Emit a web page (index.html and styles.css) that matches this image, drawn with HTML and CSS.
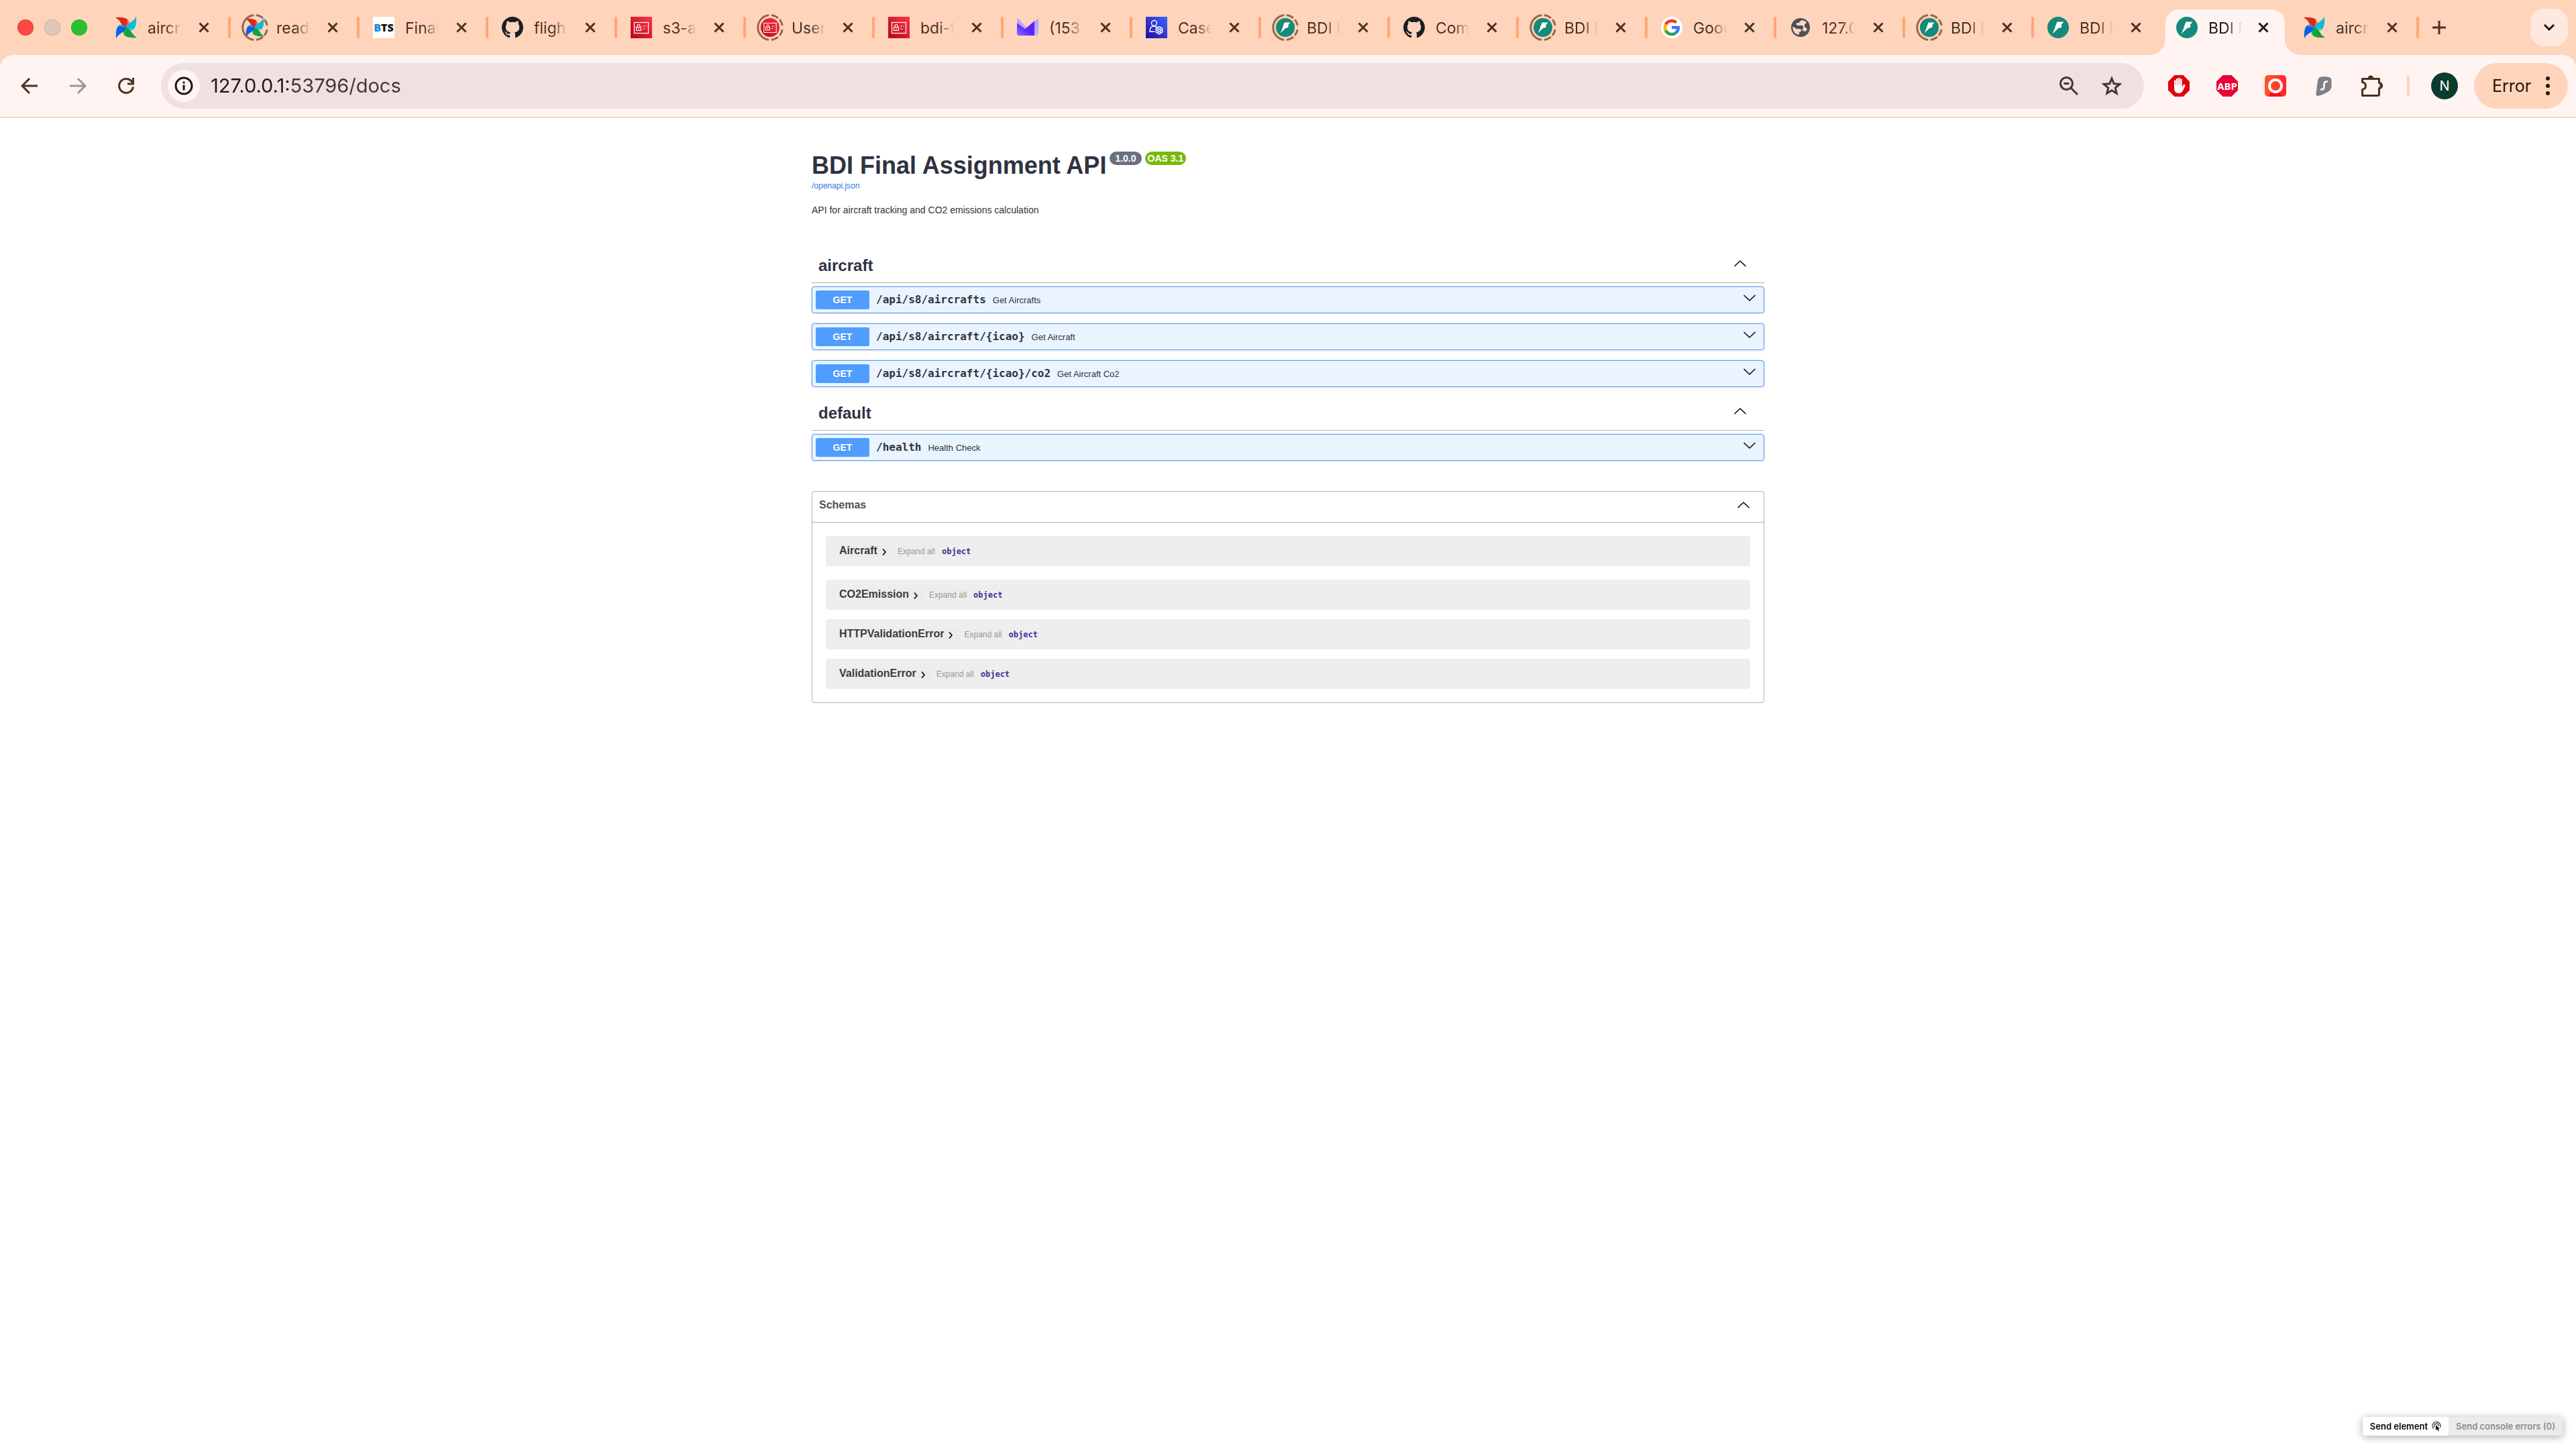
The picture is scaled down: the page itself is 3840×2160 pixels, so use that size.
FILE: index.html
```html
<!DOCTYPE html>
<html lang="en">
<head>
<meta charset="utf-8">
<title>BDI Final Assignment API</title>
<link rel="stylesheet" href="styles.css">
</head>
<body>
<svg class="defs" width="0" height="0" aria-hidden="true">
  <defs>
    <linearGradient id="red" x1="0" y1="1" x2="1" y2="0"><stop offset="0" stop-color="#b8041a"/><stop offset="1" stop-color="#ff3545"/></linearGradient>
    <linearGradient id="blue" x1="0" y1="1" x2="1" y2="0"><stop offset="0" stop-color="#220ba0"/><stop offset="1" stop-color="#3f66ff"/></linearGradient>
    <linearGradient id="mail" x1="0" y1="1" x2="1" y2="0"><stop offset="0" stop-color="#8f6bff"/><stop offset=".5" stop-color="#5a24fb"/></linearGradient>
    <linearGradient id="mailedge" x1="0" y1="0" x2="0" y2="1"><stop offset="0" stop-color="#b39cff"/><stop offset="1" stop-color="#c9b3f5"/></linearGradient>
    <linearGradient id="orange" x1="0" y1="0" x2="1" y2="0"><stop offset="0" stop-color="#ff5a26"/><stop offset="1" stop-color="#ff2430"/></linearGradient>
    <path id="blade" d="M0 1Q13 0 18 4Q22 8 19 12L16 16Q11 15 8 9Q5 4 0 1Z"/>
    <path id="bladelight" d="M18 4Q22 8 19 12L16 16Q18 10 18 4Z"/>
    <symbol id="pinwheel" viewBox="0 0 32 32">
      <use href="#blade" fill="#dd2a1c"/><use href="#bladelight" fill="#ff6a4a"/>
      <g transform="rotate(90 16 16)"><use href="#blade" fill="#14b8cf"/><use href="#bladelight" fill="#15dbef"/></g>
      <g transform="rotate(180 16 16)"><use href="#blade" fill="#13a336"/><use href="#bladelight" fill="#00c653"/></g>
      <g transform="rotate(270 16 16)"><use href="#blade" fill="#0b5fea"/><use href="#bladelight" fill="#13b6e8"/></g>
    </symbol>
    <symbol id="github" viewBox="0 0 16 16"><path fill="#1b1f24" d="M8 0C3.58 0 0 3.58 0 8c0 3.54 2.29 6.53 5.47 7.59.4.07.55-.17.55-.38 0-.19-.01-.82-.01-1.49-2.01.37-2.53-.49-2.69-.94-.09-.23-.48-.94-.82-1.13-.28-.15-.68-.52-.01-.53.63-.01 1.08.58 1.23.82.72 1.21 1.87.87 2.33.66.07-.52.28-.87.51-1.07-1.78-.2-3.64-.89-3.64-3.95 0-.87.31-1.59.82-2.15-.08-.2-.36-1.02.08-2.12 0 0 .67-.21 2.2.82.64-.18 1.32-.27 2-.27s1.36.09 2 .27c1.53-1.04 2.2-.82 2.2-.82.44 1.1.16 1.92.08 2.12.51.56.82 1.27.82 2.15 0 3.07-1.87 3.75-3.65 3.95.29.25.54.73.54 1.48 0 1.07-.01 1.93-.01 2.2 0 .21.15.46.55.38A8.01 8.01 0 0 0 16 8c0-4.42-3.58-8-8-8z"/></symbol>
    <symbol id="iamcard" viewBox="0 0 32 32"><g fill="none" stroke="#fff" stroke-width="1.200"><rect x="5.500" y="8.500" width="21" height="16"/><rect x="8.500" y="15.500" width="7" height="5"/><path d="M10 15.500v-2a2 2 0 0 1 4 0v2M12 17v2M18.500 14h2.500M22.500 14h1.500M18.500 18h3"/></g></symbol>
    <symbol id="iam" viewBox="0 0 32 32"><rect width="32" height="32" fill="url(#red)"/><use href="#iamcard"/></symbol>
    <symbol id="iamround" viewBox="0 0 32 32"><circle cx="16" cy="16" r="16" fill="url(#red)"/><use href="#iamcard"/></symbol>
    <symbol id="proton" viewBox="0 0 32 32"><path d="M26 6.500L32 3v22a3 3 0 0 1-3 3h-3z" fill="url(#mailedge)"/><path d="M0 9L12 18L26 6.500V28H3a3 3 0 0 1-3-3z" fill="url(#mail)"/><path d="M0 4Q0 1 3 4L13 15Q16 17 19 13L12 18L0 9z" fill="#b8a1ff"/></symbol>
    <symbol id="cases" viewBox="0 0 32 32"><rect width="32" height="32" fill="url(#blue)"/><g fill="none" stroke="#fff" stroke-width="1.400"><circle cx="12.500" cy="9.500" r="4"/><path d="M13 22H6Q6 14 12 14Q15 14 17 16"/><circle cx="20" cy="20.500" r="2"/><path d="M18.700 15h2.600l.5 2 2-.6 1.300 2.200-1.500 1.500 1.500 1.600-1.300 2.200-2-.5-.5 2.100h-2.600l-.5-2.100-2 .5-1.300-2.200 1.500-1.600-1.500-1.500 1.300-2.200 2 .6z"/></g></symbol>
    <symbol id="fastapi" viewBox="0 0 32 32"><circle cx="16" cy="16" r="16" fill="#15897a"/><path fill="#fff" d="M14.500 7.500H24.500L20 13H22L20 16.500H17L7.500 25.500L11.500 16.500L11 16.500Z"/></symbol>
    <symbol id="google" viewBox="0 0 32 32"><circle cx="16" cy="16" r="16" fill="#fff"/><g fill="none" stroke-width="4.500"><path stroke="#ea3a31" d="M7 11.500A10 10 0 0 1 22.700 8.700"/><path stroke="#fbb704" d="M7 11.500A10 10 0 0 0 7 20.500"/><path stroke="#2ba24c" d="M7 20.500A10 10 0 0 0 22.400 23.700"/><path stroke="#3a79f2" d="M22.400 23.700A10 10 0 0 0 25.800 16H16"/></g></symbol>
    <symbol id="globe" viewBox="0 0 32 32"><circle cx="16" cy="16" r="14" fill="#4b5157"/><path fill="#fed4bb" d="M4 15Q7 15 10 18H14Q18 18 17 22Q13 22 14 27Q5 26 4 15ZM19 5Q14 6 14 9H10Q9 13 12 13H19Q22 17 18 19Q23 25 26 19Q25 16 22 15V11Q26 10 24 7Z"/></symbol>
    <symbol id="ring" viewBox="0 0 40 40"><g fill="none" stroke="#95674c" stroke-width="3" stroke-linecap="round"><path d="M17 1.800A18.500 18.500 0 0 0 17 38.200"/><path d="M23 1.800A18.500 18.500 0 0 1 31 5.200M34.800 9.200A18.500 18.500 0 0 1 38 15.800M38 24.200A18.500 18.500 0 0 1 34.800 30.800M31 34.800A18.500 18.500 0 0 1 23 38.200"/></g></symbol>
    <symbol id="close" viewBox="0 0 16 16"><path d="M1.500 1.500l13 13M14.500 1.500l-13 13" fill="none" stroke="currentColor" stroke-width="3"/></symbol>
    <symbol id="up" viewBox="0 0 18 10"><path d="M.5 9L9 1L17.500 9" fill="none" stroke="#000" stroke-width="1.500" stroke-linejoin="round"/></symbol>
    <symbol id="down" viewBox="0 0 18 10"><path d="M.5 1L9 9L17.500 1" fill="none" stroke="#000" stroke-width="1.500" stroke-linejoin="round"/></symbol>
    <symbol id="next" viewBox="0 0 8 12"><path d="M2 1.500L6 6L2 10.500" fill="none" stroke="#000" stroke-width="1.600"/></symbol>
  </defs>
</svg>

<header class="browser">
  <div class="strip">
    <div class="lights"><i class="light light-close"></i><i class="light light-min"></i><i class="light light-full"></i></div>
    <div class="tabs">
      <div class="tab"><span class="favicon"><svg class="fav"><use href="#pinwheel"/></svg></span><span class="label">aircr</span><button class="close" aria-label="Close tab"><svg><use href="#close"/></svg></button></div>
      <div class="tab"><span class="favicon ringed"><svg class="ring"><use href="#ring"/></svg><svg class="fav"><use href="#pinwheel"/></svg></span><span class="label">read</span><button class="close" aria-label="Close tab"><svg><use href="#close"/></svg></button></div>
      <div class="tab"><span class="favicon"><span class="bts"><b>B</b>TS</span></span><span class="label">Final</span><button class="close" aria-label="Close tab"><svg><use href="#close"/></svg></button></div>
      <div class="tab"><span class="favicon"><svg class="fav"><use href="#github"/></svg></span><span class="label">fligh</span><button class="close" aria-label="Close tab"><svg><use href="#close"/></svg></button></div>
      <div class="tab"><span class="favicon"><svg class="fav"><use href="#iam"/></svg></span><span class="label">s3-a</span><button class="close" aria-label="Close tab"><svg><use href="#close"/></svg></button></div>
      <div class="tab"><span class="favicon ringed"><svg class="ring"><use href="#ring"/></svg><svg class="fav"><use href="#iamround"/></svg></span><span class="label">User</span><button class="close" aria-label="Close tab"><svg><use href="#close"/></svg></button></div>
      <div class="tab"><span class="favicon"><svg class="fav"><use href="#iam"/></svg></span><span class="label">bdi-f</span><button class="close" aria-label="Close tab"><svg><use href="#close"/></svg></button></div>
      <div class="tab"><span class="favicon"><svg class="fav"><use href="#proton"/></svg></span><span class="label">(153</span><button class="close" aria-label="Close tab"><svg><use href="#close"/></svg></button></div>
      <div class="tab"><span class="favicon"><svg class="fav"><use href="#cases"/></svg></span><span class="label">Case</span><button class="close" aria-label="Close tab"><svg><use href="#close"/></svg></button></div>
      <div class="tab"><span class="favicon ringed"><svg class="ring"><use href="#ring"/></svg><svg class="fav"><use href="#fastapi"/></svg></span><span class="label">BDI F</span><button class="close" aria-label="Close tab"><svg><use href="#close"/></svg></button></div>
      <div class="tab"><span class="favicon"><svg class="fav"><use href="#github"/></svg></span><span class="label">Com</span><button class="close" aria-label="Close tab"><svg><use href="#close"/></svg></button></div>
      <div class="tab"><span class="favicon ringed"><svg class="ring"><use href="#ring"/></svg><svg class="fav"><use href="#fastapi"/></svg></span><span class="label">BDI F</span><button class="close" aria-label="Close tab"><svg><use href="#close"/></svg></button></div>
      <div class="tab"><span class="favicon"><svg class="fav"><use href="#google"/></svg></span><span class="label">Goog</span><button class="close" aria-label="Close tab"><svg><use href="#close"/></svg></button></div>
      <div class="tab"><span class="favicon"><svg class="fav"><use href="#globe"/></svg></span><span class="label">127.0</span><button class="close" aria-label="Close tab"><svg><use href="#close"/></svg></button></div>
      <div class="tab"><span class="favicon ringed"><svg class="ring"><use href="#ring"/></svg><svg class="fav"><use href="#fastapi"/></svg></span><span class="label">BDI F</span><button class="close" aria-label="Close tab"><svg><use href="#close"/></svg></button></div>
      <div class="tab plain"><span class="favicon"><svg class="fav"><use href="#fastapi"/></svg></span><span class="label">BDI F</span><button class="close" aria-label="Close tab"><svg><use href="#close"/></svg></button></div>
      <div class="tab plain active"><svg class="tab-shape" viewBox="0 0 226 68"><path fill="#fff4f1" d="M0 68A24 24 0 0 0 24 44V20A20 20 0 0 1 44 0H182A20 20 0 0 1 202 20V44A24 24 0 0 0 226 68Z"/></svg><span class="favicon"><svg class="fav"><use href="#fastapi"/></svg></span><span class="label">BDI F</span><button class="close" aria-label="Close tab"><svg><use href="#close"/></svg></button></div>
      <div class="tab"><span class="favicon"><svg class="fav"><use href="#pinwheel"/></svg></span><span class="label">aircr</span><button class="close" aria-label="Close tab"><svg><use href="#close"/></svg></button></div>
    </div>
    <button class="new-tab" aria-label="New tab"><svg width="20" height="20" viewBox="0 0 20 20"><path d="M10 0v20M0 10h20" stroke="#4a3020" stroke-width="3"/></svg></button>
    <button class="tab-search" aria-label="Search tabs"><svg width="18" height="12" viewBox="0 0 18 12"><path d="M2 2l7 7 7-7" fill="none" stroke="#1f1510" stroke-width="3"/></svg></button>
  </div>

  <div class="toolbar">
    <div class="nav">
      <button class="tool" aria-label="Back"><svg width="26" height="26" viewBox="0 0 26 26"><path d="M25 13H3M13 2L2 13l11 11" fill="none" stroke="#4a3020" stroke-width="3"/></svg></button>
      <button class="tool" aria-label="Forward"><svg width="26" height="26" viewBox="0 0 26 26"><path d="M1 13h22M13 2l11 11-11 11" fill="none" stroke="#a2938e" stroke-width="3"/></svg></button>
      <button class="tool" aria-label="Reload"><svg width="26" height="26" viewBox="0 0 26 26"><path d="M23.500 14.500A10.500 10.500 0 1 1 21 6l2 3" fill="none" stroke="#4a3020" stroke-width="3"/><path d="M23.500 1v9H15" fill="none" stroke="#4a3020" stroke-width="3"/></svg></button>
    </div>
    <div class="omnibox">
      <button class="site-info" aria-label="Site information"><svg width="28" height="28" viewBox="0 0 28 28"><circle cx="14" cy="14" r="12" fill="none" stroke="#1f1815" stroke-width="3"/><path d="M14 12.500v8M14 7.500v3" stroke="#1f1815" stroke-width="3"/></svg></button>
      <input class="url" type="text" aria-label="Address" value="127.0.0.1:53796/docs">
      <button class="tool" aria-label="Zoom"><svg width="28" height="28" viewBox="0 0 28 28"><g fill="none" stroke="#403733" stroke-width="3"><circle cx="10.500" cy="10.500" r="9"/><path d="M17 17l10 10M6.500 10.500h8"/></g></svg></button>
      <button class="tool" aria-label="Bookmark"><svg width="30" height="30" viewBox="0 0 30 30"><path d="M15 4l3.200 7.800 8.500.7-6.500 5.500 2 8.200-7.200-4.400-7.200 4.400 2-8.200-6.500-5.500 8.500-.7z" fill="none" stroke="#403733" stroke-width="3"/></svg></button>
    </div>
    <div class="extensions">
      <button class="ext" aria-label="AdBlock"><svg width="32" height="32" viewBox="0 0 32 32"><path fill="#e0000f" d="M9.500 0h13L32 9.500v13L22.500 32h-13L0 22.500v-13z"/><path fill="#fff" d="M9 16V8.500a1.200 1.200 0 0 1 2.500 0V15h.5V6a1.300 1.300 0 0 1 2.600 0v9h.5V5a1.300 1.300 0 0 1 2.600 0v10h.5V6.500a1.200 1.200 0 0 1 2.500 0V18l1.800-3.500a1.700 1.700 0 0 1 3 1.200L22 23q-2 4-6 4-7 0-7-7z"/></svg></button>
      <button class="ext abp" aria-label="Adblock Plus">ABP</button>
      <button class="ext" aria-label="Recorder"><svg width="32" height="32" viewBox="0 0 32 32"><rect width="32" height="32" rx="5" fill="url(#orange)"/><path fill="#ff0a1e" d="M9 25h14l2 7H6z"/><circle cx="16" cy="16" r="9" fill="none" stroke="#fff" stroke-width="4"/></svg></button>
      <button class="ext" aria-label="VPN"><svg width="24" height="32" viewBox="0 0 24 32"><path fill="#7e8089" d="M8 2.500Q16 1 21 3.500Q24 5 23.500 9V17Q23 22 18 25Q10 30 3 31Q0 31 .5 27L3 8Q4 3 8 2.500Z"/><path d="M17 9.500q-4.500 0-4.500 4v4q0 4-4.500 4" fill="none" stroke="#fff" stroke-width="2.500" stroke-linecap="round"/></svg></button>
      <button class="ext" aria-label="Extensions"><svg width="32" height="32" viewBox="0 0 32 32"><path d="M1.500 5.500h25v6a4 4 0 0 1 0 8v9a2 2 0 0 1-2 2h-23v-9q5-1 5-5.500t-5-5.500z" fill="none" stroke="#4a3020" stroke-width="3" stroke-linejoin="round"/><path fill="#4a3020" d="M10 4.500a4 4 0 0 1 8 0zM27.500 11.500a4 4 0 0 1 0 9z"/></svg></button>
    </div>
    <i class="divider"></i>
    <button class="avatar">N</button>
    <button class="menu">Error<svg width="6" height="28" viewBox="0 0 6 28"><g fill="#2a1508"><circle cx="3" cy="3" r="3"/><circle cx="3" cy="14" r="3"/><circle cx="3" cy="25" r="3"/></g></svg></button>
  </div>
</header>

<main class="docs">
  <div class="title-row">
    <h1>BDI Final Assignment API</h1>
    <span class="version">1.0.0</span>
    <span class="version oas">OAS 3.1</span>
  </div>
  <a class="spec" href="/openapi.json">/openapi.json</a>
  <p class="about">API for aircraft tracking and CO2 emissions calculation</p>

  <section class="tag">
    <h2 class="tag-head"><a href="#aircraft">aircraft</a><button class="toggle" aria-label="Collapse aircraft"><svg><use href="#up"/></svg></button></h2>
    <div class="ops">
      <div class="op"><span class="method">GET</span><a class="path" href="#aircrafts">/api/s8/aircrafts</a><span class="summary">Get Aircrafts</span><button class="toggle" aria-label="Expand operation"><svg><use href="#down"/></svg></button></div>
      <div class="op"><span class="method">GET</span><a class="path" href="#icao">/api/s8/aircraft/{icao}</a><span class="summary">Get Aircraft</span><button class="toggle" aria-label="Expand operation"><svg><use href="#down"/></svg></button></div>
      <div class="op"><span class="method">GET</span><a class="path" href="#co2">/api/s8/aircraft/{icao}/co2</a><span class="summary">Get Aircraft Co2</span><button class="toggle" aria-label="Expand operation"><svg><use href="#down"/></svg></button></div>
    </div>
  </section>
  <section class="tag">
    <h2 class="tag-head"><a href="#default">default</a><button class="toggle" aria-label="Collapse default"><svg><use href="#up"/></svg></button></h2>
    <div class="ops">
      <div class="op"><span class="method">GET</span><a class="path" href="#health">/health</a><span class="summary">Health Check</span><button class="toggle" aria-label="Expand operation"><svg><use href="#down"/></svg></button></div>
    </div>
  </section>

  <section class="schemas">
    <h2 class="schemas-head">Schemas<button class="toggle" aria-label="Collapse schemas"><svg><use href="#up"/></svg></button></h2>
    <div class="models">
      <article class="model"><button class="name">Aircraft<svg><use href="#next"/></svg></button><button class="expand">Expand all</button><strong class="type">object</strong></article>
      <article class="model"><button class="name">CO2Emission<svg><use href="#next"/></svg></button><button class="expand">Expand all</button><strong class="type">object</strong></article>
      <article class="model"><button class="name">HTTPValidationError<svg><use href="#next"/></svg></button><button class="expand">Expand all</button><strong class="type">object</strong></article>
      <article class="model"><button class="name">ValidationError<svg><use href="#next"/></svg></button><button class="expand">Expand all</button><strong class="type">object</strong></article>
    </div>
  </section>
</main>

<div class="sender">
  <button class="send">Send element<svg width="14" height="15" viewBox="0 0 14 15"><g fill="none" stroke="#222" stroke-width="1.200"><path d="M2.500 10.500A6 6 0 1 1 12.500 9"/><path d="M4 8.500A3.500 3.500 0 1 1 10.500 7"/></g><path fill="#000" d="M6 5v8l2-1.500 1.500 3 1.200-.6L9.500 11H12z"/></svg></button>
  <button class="send" disabled>Send console errors (0)</button>
</div>
</body>
</html>
```
FILE: styles.css
```css
* { box-sizing: border-box; }

body {
  margin: 0;
  min-height: 100vh;
  background: #fff;
  color: #2f3241;
  font-family: "Liberation Sans", Arial, sans-serif;
}

button {
  display: flex;
  align-items: center;
  justify-content: center;
  margin: 0;
  padding: 0;
  border: 0;
  background: none;
  color: inherit;
  font: inherit;
}

a { color: inherit; text-decoration: none; }
h1, h2, p { margin: 0; }
.defs { position: absolute; }

/* Browser window */
.browser {
  background: #fed4bb;
  color: #4a3020;
  font-family: Inter, sans-serif;
}

.strip {
  display: flex;
  align-items: center;
  height: 82px;
  padding: 0 12px 0 26px;
}

.lights { display: flex; flex: none; gap: 16px; margin-right: 22px; }
.light { width: 24px; height: 24px; border-radius: 50%; border: 1px solid #0002; }
.light-close { background: #ff4645; }
.light-min { background: #dec8bc; }
.light-full { background: #28c231; }

.tabs { display: flex; flex: 0 1 auto; min-width: 0; }

.tab {
  position: relative;
  display: flex;
  align-items: center;
  width: 192px;
  height: 82px;
  padding-left: 16px;
}
.tab::after {
  content: "";
  width: 4px;
  height: 32px;
  margin-left: auto;
  border-radius: 2px;
  background: #ffa673;
}
.tab.plain::after { background: none; }
.tab.active { width: 190px; color: #1f1815; }
.tab-shape { position: absolute; left: -20px; bottom: 0; width: 226px; height: 68px; }

.favicon { position: relative; display: grid; flex: none; place-items: center; width: 40px; height: 40px; }
.fav { width: 32px; height: 32px; }
.ring { position: absolute; inset: 0; width: 40px; height: 40px; }
.ringed .fav { width: 28px; height: 28px; }

.bts {
  display: grid;
  grid-auto-flow: column;
  place-content: center;
  width: 32px;
  height: 32px;
  background: #fff;
  color: #111;
  font: 800 16px/32px "Open Sans", sans-serif;
}
.bts b { color: #1b87d6; font-weight: 800; }

.label {
  position: relative;
  flex: none;
  width: 50px;
  margin: 2px 0 0 12px;
  overflow: hidden;
  white-space: nowrap;
  font-size: 23px;
  line-height: 32px;
  -webkit-mask-image: linear-gradient(90deg, #000 55%, transparent);
  mask-image: linear-gradient(90deg, #000 55%, transparent);
}

.close { position: relative; flex: none; width: 32px; height: 32px; margin-left: 18px; }
.active .close { margin-left: 16px; }
.close svg { width: 16px; height: 16px; }

.new-tab { flex: none; width: 32px; height: 32px; margin-left: 14px; }
.tab-search {
  flex: none;
  width: 56px;
  height: 56px;
  margin-left: auto;
  border-radius: 20px;
  background: #ffe8de;
}

.toolbar {
  display: flex;
  align-items: center;
  height: 94px;
  padding: 0 12px 0 20px;
  border-bottom: 2px solid #f3d5cb;
  border-radius: 20px 20px 0 0;
  background: #fff4f1;
}

.nav { display: flex; gap: 24px; margin-right: 28px; }
.tool { flex: none; width: 48px; height: 48px; }

.omnibox {
  display: flex;
  flex: 1;
  align-items: center;
  height: 68px;
  padding: 0 24px 0 10px;
  border-radius: 34px;
  background: #eee1df;
}
.omnibox .tool + .tool { margin-left: 16px; }
.site-info { flex: none; width: 48px; height: 48px; border-radius: 50%; background: #fff4f1; }
.url {
  flex: 1;
  min-width: 0;
  margin: 0 16px;
  padding: 0;
  border: 0;
  background: linear-gradient(90deg, #1f1815 118px, #403733 118px);
  -webkit-background-clip: text;
  background-clip: text;
  color: transparent;
  font: 29px/40px Inter, sans-serif;
}

.extensions { display: flex; gap: 40px; margin: 0 36px; }
.ext { width: 32px; height: 32px; }
.abp {
  background: #ea0034;
  clip-path: polygon(30% 0, 70% 0, 100% 30%, 100% 70%, 70% 100%, 30% 100%, 0 70%, 0 30%);
  color: #fff;
  font: 700 15px/32px "Noto Sans", sans-serif;
}
.divider { width: 4px; height: 32px; border-radius: 2px; background: #fed4bb; }
.avatar {
  width: 40px;
  height: 40px;
  margin: 0 24px 0 32px;
  border-radius: 50%;
  background: #0a3d2f;
  color: #fff;
  font-size: 20px;
}
.menu {
  gap: 22px;
  width: 140px;
  height: 68px;
  border-radius: 34px;
  background: #fed4bb;
  color: #2a1508;
  font-size: 25px;
}

/* API documentation */
.docs {
  max-width: 1460px;
  margin: 0 auto;
  padding: 50px 20px;
}

.title-row { display: flex; align-items: flex-start; }
h1 { margin-right: 5px; font-size: 36px; line-height: 42px; }
.version {
  margin-right: 5px;
  padding: 0 8px;
  border-radius: 10px;
  background: #6b7080;
  color: #fff;
  font-size: 14px;
  font-weight: 700;
  line-height: 20px;
}
.version.oas { padding: 0 4px; background: #79b80c; }

.spec { display: block; margin-top: 1px; color: #2c78e4; font-size: 12px; line-height: 16px; }
.about { margin: 18px 0 49px; font-size: 14px; line-height: 20px; }

.tag { margin-bottom: 15px; }
.tag-head {
  display: flex;
  align-items: flex-start;
  justify-content: space-between;
  margin-bottom: 5px;
  padding: 10px 27px 11px 10px;
  border-bottom: 1px solid #b1b3b8;
  font-size: 24px;
  line-height: 28px;
}
.tag-head .toggle { margin-top: 6px; }
.toggle svg { width: 18px; height: 10px; }

.ops { display: grid; gap: 15px; }
.op {
  display: flex;
  align-items: center;
  height: 40px;
  padding: 0 12px 0 5px;
  border: 1px solid #509dff;
  border-radius: 4px;
  background: #eaf4ff;
  box-shadow: 0 0 3px #0003;
}
.method {
  width: 80px;
  border-radius: 3px;
  background: #509dff;
  color: #fff;
  text-align: center;
  text-shadow: 0 1px 0 #0002;
  font-size: 14px;
  font-weight: 700;
  line-height: 28px;
}
.path { margin: 0 10px; font: 700 16px/20px "DejaVu Sans Mono", monospace; }
.summary { flex: 1; font-size: 13px; }
.op .toggle { align-self: flex-start; margin-top: 11px; }

.schemas {
  margin-top: 45px;
  border: 1px solid #b1b3b8;
  border-radius: 4px;
}
.schemas-head {
  display: flex;
  justify-content: space-between;
  padding: 11px 21px 16px 10px;
  border-bottom: 1px solid #b1b3b8;
  color: #505050;
  font-size: 16px;
  line-height: 18px;
}
.models { display: grid; gap: 14px; padding: 20px; }
.model {
  display: flex;
  align-items: baseline;
  height: 45px;
  padding: 13px 20px;
  border-radius: 4px;
  background: #eee;
}
.model:first-child { margin-bottom: 6px; }
.name {
  gap: 6px;
  padding-right: 10px;
  background: #ececec;
  color: #3b3b3b;
  font-size: 16px;
  font-weight: 700;
  line-height: 18px;
}
.name svg { width: 8px; height: 12px; margin-top: 4px; }
.expand { margin: 0 10px 0 6px; background: #ececec; color: #999; font-size: 12px; line-height: 18px; }
.type { color: #3b3598; font: 700 12px/18px "DejaVu Sans Mono", monospace; }

/* Floating panel over the page */
.sender {
  position: fixed;
  right: 20px;
  bottom: 20px;
  display: flex;
  border-radius: 4px;
  background: #fff;
  box-shadow: 0 2px 12px #0005;
  font-family: Inter, sans-serif;
}
.send {
  gap: 6px;
  height: 28px;
  padding: 0 11px;
  color: #000;
  font-size: 13px;
  font-weight: 600;
  border-radius: 4px 0 0 4px;
}
.send:disabled { background: #ebebeb; color: #8c8c8c; border-radius: 0 4px 4px 0; }
```
